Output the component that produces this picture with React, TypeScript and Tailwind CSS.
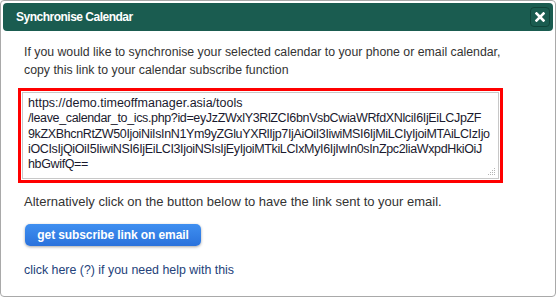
const lines = [
  "https://demo.timeoffmanager.asia/tools",
  "/leave_calendar_to_ics.php?id=eyJzZWxlY3RlZCI6bnVsbCwiaWRfdXNlciI6IjEiLCJpZF",
  "9kZXBhcnRtZW50IjoiNiIsInN1Ym9yZGluYXRlIjp7IjAiOiI3IiwiMSI6IjMiLCIyIjoiMTAiLCIzIjo",
  "iOCIsIjQiOiI5IiwiNSI6IjEiLCI3IjoiNSIsIjEyIjoiMTkiLCIxMyI6IjIwIn0sInZpc2liaWxpdHkiOiJ",
  "hbGwifQ==",
];

export default function App() {
  return (
    <div className="w-[556px] h-[297px] border border-[#a9a9a9] rounded-[4px] p-[2px] bg-white font-['Liberation_Sans',Arial,sans-serif]">
      {/* title bar */}
      <div className="h-[28px] rounded-[4px] bg-[#1a5c50] flex items-center justify-between pl-[13px] pr-[3px]">
        <span className="text-white font-bold text-[12px] tracking-[-0.5px]">Synchronise Calendar</span>
        <button className="w-[20px] h-[20px] border border-[#0f4439] rounded-[4px] bg-[#1a5c50] flex items-center justify-center">
          <svg width="10" height="10" viewBox="0 0 10 10">
            <path d="M1.5 1.5l7 7M8.5 1.5l-7 7" stroke="white" strokeWidth="2.6" strokeLinecap="square" />
          </svg>
        </button>
      </div>

      <div className="pl-[21px] pt-[12px]">
        <p className="text-[12.3px] leading-[18px] text-[#333]">
          If you would like to synchronise your selected calendar to your phone or email calendar,
          <br />
          copy this link to your calendar subscribe function
        </p>

        <div className="mt-[9px] -ml-[6px] w-[485px] h-[95px] border-[3px] border-[#ff0000] p-[1px]">
          <div className="relative h-full overflow-hidden border border-[#c8c8c8] pl-[5px] pt-[3px] text-[12.5px] leading-[15.3px] text-[#1a1a2e] whitespace-pre">
            {lines.map((l) => (
              <div key={l} className="tracking-[-0.36px] first:tracking-normal">{l}</div>
            ))}
            <svg className="absolute right-[2px] bottom-[2px]" width="8" height="8" viewBox="0 0 8 8">
              <g fill="#b5b5b5">
                <rect x="6" y="0" width="1" height="1" />
                <rect x="4" y="2" width="1" height="1" />
                <rect x="6" y="2" width="1" height="1" />
                <rect x="2" y="4" width="1" height="1" />
                <rect x="4" y="4" width="1" height="1" />
                <rect x="6" y="4" width="1" height="1" />
                <rect x="0" y="6" width="1" height="1" />
                <rect x="2" y="6" width="1" height="1" />
                <rect x="4" y="6" width="1" height="1" />
                <rect x="6" y="6" width="1" height="1" />
              </g>
            </svg>
          </div>
        </div>

        <p className="mt-[10px] text-[13px] leading-[18px] text-[#333]">
          Alternatively click on the button below to have the link sent to your email.
        </p>

        <button className="mt-[13px] ml-[1px] w-[176px] h-[22px] rounded-[5px] bg-gradient-to-b from-[#3f8ff0] to-[#2a72dc] shadow-[0_1px_3px_rgba(0,0,0,0.35)] text-white font-bold text-[12px] tracking-[-0.1px] flex items-center justify-center">
          get subscribe link on email
        </button>

        <p className="mt-[15px] text-[12.4px] leading-[18px] text-[#24427a]">
          click here (?) if you need help with this
        </p>
      </div>
    </div>
  );
}
